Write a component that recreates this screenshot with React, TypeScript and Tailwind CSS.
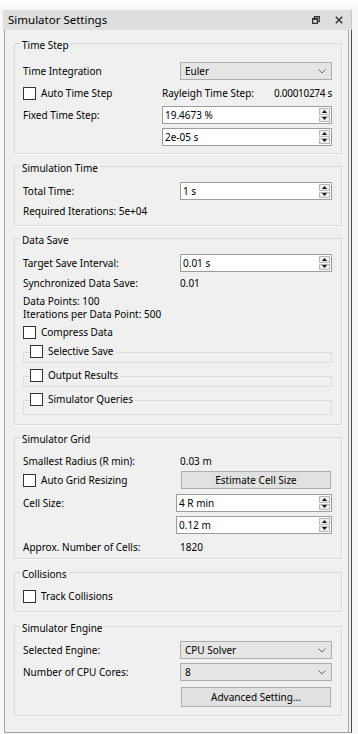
import type { ReactNode } from "react";

const panelBg = "bg-[#f0f0f0]";

function Group({ title, className, children }: { title: string; className?: string; children: ReactNode }) {
  return (
    <div
      className={`relative ml-[9px] w-[328px] border border-[#d9d9d9] pl-[8px] pr-[9px] shadow-[1px_1px_0_#fafafa] ${className ?? ""}`}
    >
      <span className={`absolute left-[5px] top-[-6px] px-[2px] leading-[15px] ${panelBg}`}>{title}</span>
      {children}
    </div>
  );
}

function Checkbox() {
  return <span className="block h-[13px] w-[13px] shrink-0 border border-[#333] bg-white" />;
}

function CheckRow({ label, className }: { label: string; className?: string }) {
  return (
    <div className={`flex h-[13px] shrink-0 items-center gap-[5px] ${className ?? ""}`}>
      <Checkbox />
      <span className="leading-[13px]">{label}</span>
    </div>
  );
}

function SpinButtons() {
  return (
    <div className="my-[1px] mr-[1px] flex w-[11px] flex-col gap-[1px]">
      {["up", "down"].map((d) => (
        <div key={d} className="flex flex-1 items-center justify-center border border-[#b9b9b9] bg-[#ececec]">
          <svg width="5" height="3" viewBox="0 0 5 3">
            {d === "up" ? <path d="M0 3 L2.5 0 L5 3 Z" fill="#111" /> : <path d="M0 0 L2.5 3 L5 0 Z" fill="#111" />}
          </svg>
        </div>
      ))}
    </div>
  );
}

function Spin({ value, className }: { value: string; className?: string }) {
  return (
    <div className={`flex h-[18px] border border-[#9c9c9c] bg-white ${className ?? ""}`}>
      <span className="flex-1 pl-[2px] leading-[16px]">{value}</span>
      <SpinButtons />
    </div>
  );
}

function Combo({ value }: { value: string }) {
  return (
    <div className="flex h-[18px] flex-1 items-center border border-[#adadad] bg-[#e5e5e5] pl-[4px] pr-[5px]">
      <span className="flex-1 leading-[16px]">{value}</span>
      <svg width="8" height="5" viewBox="0 0 8 5">
        <path d="M0.5 0.5 L4 4 L7.5 0.5" fill="none" stroke="#6a6a6a" strokeWidth="1" />
      </svg>
    </div>
  );
}

function Button({ label, className }: { label: string; className?: string }) {
  return (
    <div
      className={`flex w-[150px] items-center justify-center border border-[#adadad] bg-[#e1e1e1] ${className ?? ""}`}
    >
      {label}
    </div>
  );
}

function SubBox({ label, boxH, className }: { label: string; boxH: string; className?: string }) {
  return (
    <div className={`relative pt-[7px] ${className ?? ""}`}>
      <div className={`border border-[#dcdcdc] ${boxH}`} />
      <div className={`absolute left-[7px] top-0 flex items-center gap-[5px] pr-[2px] ${panelBg}`}>
        <Checkbox />
        <span className="leading-[13px]">{label}</span>
      </div>
    </div>
  );
}

export default function App() {
  return (
    <div className="h-[734px] w-[358px] bg-[#f7f7f7] font-['Noto_Sans',sans-serif] text-[10px] text-black">
      <div className="h-[10px] bg-gradient-to-b from-white to-[#f4f4f4]" />

      {/* dock title bar */}
      <div className="ml-[3px] flex h-[20px] w-[349px] items-center border-r border-r-[#c4c4c4] bg-[#dedede] pl-[5px] pr-[8px]">
        <span className="flex-1 text-[11.5px] leading-[20px]">Simulator Settings</span>
        <svg width="8" height="8" viewBox="0 0 8 8" className="mr-[15px]">
          <path d="M2.5 2.5 V0.75 H7.25 V5.5 H5.5" fill="none" stroke="#333" strokeWidth="1.3" />
          <rect x="0.65" y="2.65" width="4.7" height="4.7" fill="none" stroke="#333" strokeWidth="1.3" />
          <path d="M0.5 3 H5.5" stroke="#333" strokeWidth="1.8" />
        </svg>
        <svg width="8" height="8" viewBox="0 0 8 8">
          <path d="M0.8 0.8 L7.2 7.2 M7.2 0.8 L0.8 7.2" stroke="#333" strokeWidth="1.5" />
        </svg>
      </div>

      {/* dock body */}
      <div
        className={`ml-[4px] h-[703px] w-[348px] border-b border-l border-r border-b-[#a0a0a8] border-l-[#a0a0a8] border-r-[#4a4a4a] pt-[13px] shadow-[inset_-2px_0_0_#f0f0f0,inset_-3px_0_0_#a6a6ae] ${panelBg}`}
      >
        <Group title="Time Step" className="pb-[7px] pt-[18px]">
          <div className="flex h-[18px] items-center">
            <span className="w-[157px]">Time Integration</span>
            <Combo value="Euler" />
          </div>
          <div className="mt-[6px] flex h-[14px] items-center">
            <CheckRow label="Auto Time Step" className="w-[139px]" />
            <span className="w-[100px] shrink-0 whitespace-nowrap">Rayleigh Time Step:</span>
            <div className="flex min-w-0 flex-1 justify-end">
              <span className="shrink-0 whitespace-nowrap tracking-[-0.3px]">0.00010274 s</span>
            </div>
          </div>
          <div className="mt-[6px] flex items-center">
            <span className="w-[139px]">Fixed Time Step:</span>
            <Spin value="19.4673 %" className="flex-1" />
          </div>
          <Spin value="2e-05 s" className="ml-[139px] mt-[4px]" />
        </Group>

        <Group title="Simulation Time" className="mt-[12px] pb-[7px] pt-[15px]">
          <div className="flex items-center">
            <span className="w-[157px]">Total Time:</span>
            <Spin value="1 s" className="flex-1" />
          </div>
          <div className="mt-[4px] h-[14px] leading-[14px]">Required Iterations: 5e+04</div>
        </Group>

        <Group title="Data Save" className="mt-[12px] pb-[9px] pt-[15px]">
          <div className="flex items-center">
            <span className="w-[157px]">Target Save Interval:</span>
            <Spin value="0.01 s" className="flex-1" />
          </div>
          <div className="mt-[4px] flex h-[14px] items-center">
            <span className="w-[157px]">Synchronized Data Save:</span>
            <span>0.01</span>
          </div>
          <div className="mt-[5px] leading-[12.5px]">
            Data Points: 100
            <br />
            Iterations per Data Point: 500
          </div>
          <CheckRow label="Compress Data" className="mt-[6px]" />
          <SubBox label="Selective Save" boxH="h-[11px]" className="mt-[6px]" />
          <SubBox label="Output Results" boxH="h-[11px]" className="mt-[6px]" />
          <SubBox label="Simulator Queries" boxH="h-[15px]" className="mt-[6px]" />
        </Group>

        <Group title="Simulator Grid" className="mt-[12px] pb-[4px] pt-[16px]">
          <div className="flex h-[14px] items-center">
            <span className="w-[157px]">Smallest Radius (R min):</span>
            <span>0.03 m</span>
          </div>
          <div className="mt-[3px] flex h-[18px] items-center">
            <CheckRow label="Auto Grid Resizing" className="w-[158px]" />
            <Button label="Estimate Cell Size" className="h-[18px]" />
          </div>
          <div className="mt-[5px] flex items-center">
            <span className="w-[153px]">Cell Size:</span>
            <Spin value="4 R min" className="flex-1" />
          </div>
          <Spin value="0.12 m" className="ml-[153px] mt-[4px]" />
          <div className="mt-[6px] flex h-[14px] items-center">
            <span className="w-[157px]">Approx. Number of Cells:</span>
            <span>1820</span>
          </div>
        </Group>

        <Group title="Collisions" className="mt-[13px] pb-[8px] pt-[17px]">
          <CheckRow label="Track Collisions" />
        </Group>

        <Group title="Simulator Engine" className="mt-[14px] pb-[8px] pt-[14px]">
          <div className="flex h-[18px] items-center">
            <span className="w-[157px]">Selected Engine:</span>
            <Combo value="CPU Solver" />
          </div>
          <div className="mt-[4px] flex h-[18px] items-center">
            <span className="w-[157px]">Number of CPU Cores:</span>
            <Combo value="8" />
          </div>
          <Button label="Advanced Setting..." className="ml-[158px] mt-[6px] h-[20px]" />
        </Group>
      </div>
    </div>
  );
}
